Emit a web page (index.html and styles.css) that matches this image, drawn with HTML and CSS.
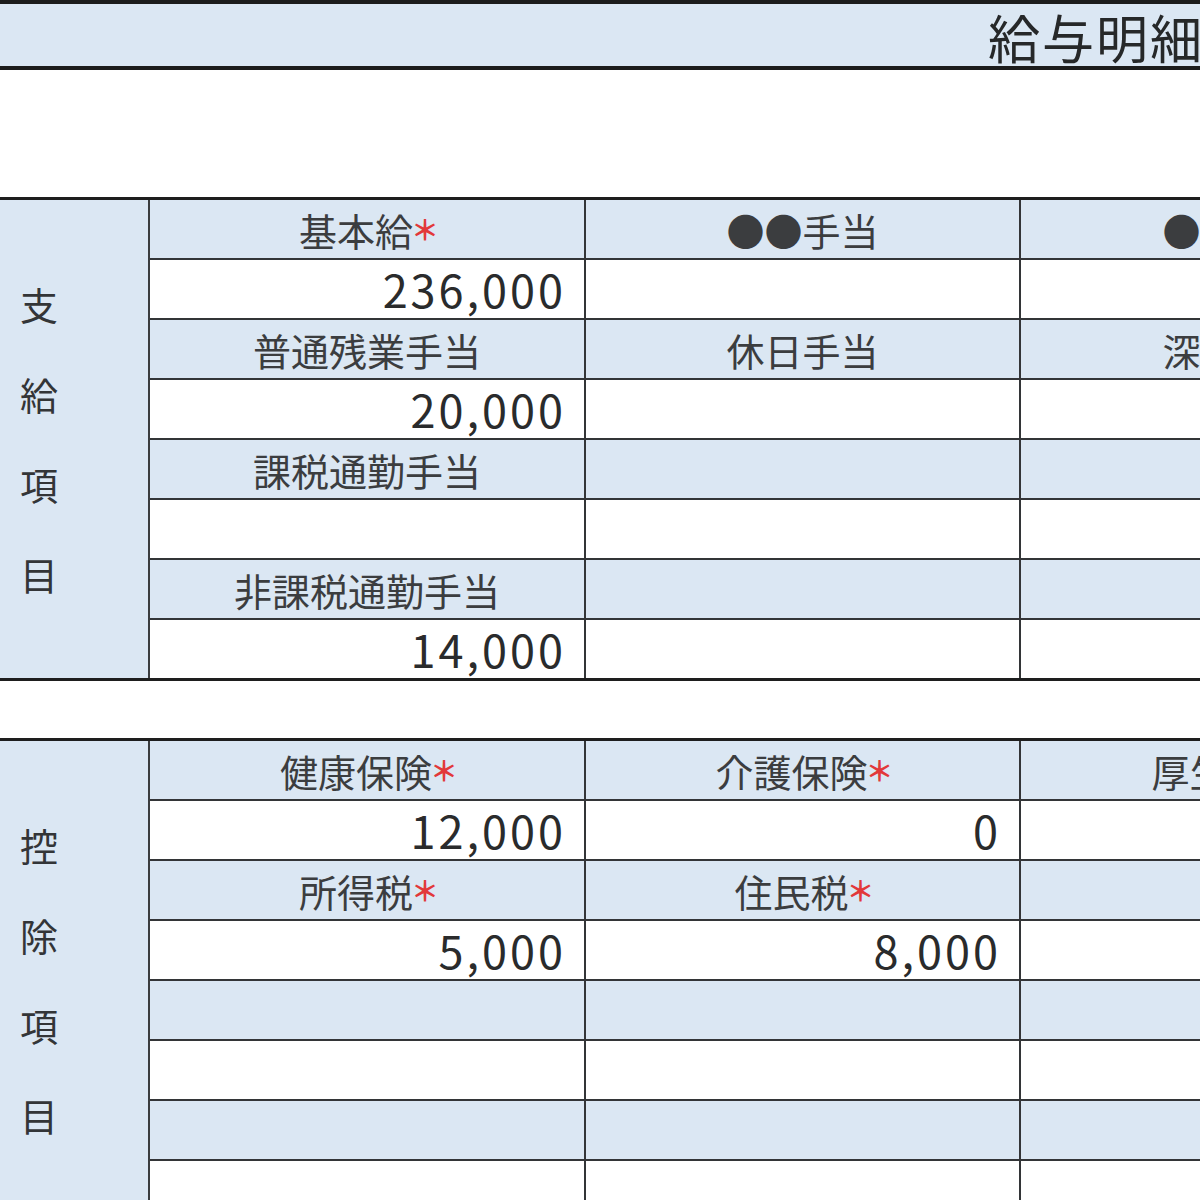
FILE: index.html
```html
<!DOCTYPE html>
<html lang="ja">
<head>
<meta charset="utf-8">
<title>給与明細</title>
<link rel="stylesheet" href="styles.css">
</head>
<body>
<div class="page">
  <header class="title-bar"><h1 class="title">給与明細</h1></header>

  <section class="sheet sheet-pay">
    <div class="side"><span>支</span><span>給</span><span>項</span><span>目</span></div>
    <div class="grid">
      <div class="cell h">基本給<span class="req">＊</span></div>
      <div class="cell h">●●手当</div>
      <div class="cell h">●●手当</div>
      <div class="cell v">236,000</div>
      <div class="cell v"></div>
      <div class="cell v"></div>
      <div class="cell h">普通残業手当</div>
      <div class="cell h">休日手当</div>
      <div class="cell h">深夜手当</div>
      <div class="cell v">20,000</div>
      <div class="cell v"></div>
      <div class="cell v"></div>
      <div class="cell h">課税通勤手当</div>
      <div class="cell h"></div>
      <div class="cell h"></div>
      <div class="cell v"></div>
      <div class="cell v"></div>
      <div class="cell v"></div>
      <div class="cell h">非課税通勤手当</div>
      <div class="cell h"></div>
      <div class="cell h"></div>
      <div class="cell v">14,000</div>
      <div class="cell v"></div>
      <div class="cell v"></div>
    </div>
  </section>

  <section class="sheet sheet-deduct">
    <div class="side"><span>控</span><span>除</span><span>項</span><span>目</span></div>
    <div class="grid">
      <div class="cell h">健康保険<span class="req">＊</span></div>
      <div class="cell h">介護保険<span class="req">＊</span></div>
      <div class="cell h">厚生年金<span class="req">＊</span></div>
      <div class="cell v">12,000</div>
      <div class="cell v">0</div>
      <div class="cell v"></div>
      <div class="cell h">所得税<span class="req">＊</span></div>
      <div class="cell h">住民税<span class="req">＊</span></div>
      <div class="cell h"></div>
      <div class="cell v">5,000</div>
      <div class="cell v">8,000</div>
      <div class="cell v"></div>
      <div class="cell h"></div>
      <div class="cell h"></div>
      <div class="cell h"></div>
      <div class="cell v"></div>
      <div class="cell v"></div>
      <div class="cell v"></div>
      <div class="cell h"></div>
      <div class="cell h"></div>
      <div class="cell h"></div>
      <div class="cell v"></div>
      <div class="cell v"></div>
      <div class="cell v"></div>
    </div>
  </section>
</div>
</body>
</html>
```
FILE: styles.css
```css
html, body {
  margin: 0;
  padding: 0;
  background: #ffffff;
}

.page {
  width: 1200px;
  height: 1200px;
  overflow: hidden;
  font-family: "Noto Sans CJK JP", "Noto Sans", sans-serif;
  color: #2f3133;
}

.title-bar {
  width: 1456px;
  height: 62px;
  background: #dbe7f3;
  border-top: 4px solid #1c1c1c;
  border-bottom: 4px solid #1c1c1c;
  display: flex;
  align-items: center;
  padding-left: 988px;
  box-sizing: content-box;
}

.title {
  margin: 4px 0 0 0;
  font-size: 52px;
  font-weight: 400;
  letter-spacing: 2px;
  line-height: 1;
  white-space: nowrap;
  color: #262829;
}

.sheet {
  width: 1456px;
  display: grid;
  grid-template-columns: 148px 1fr;
  column-gap: 2px;
  background: #3a3c3e;
  border-top: 3px solid #1e1e1e;
  border-bottom: 3px solid #1e1e1e;
}

.sheet-pay {
  margin-top: 127px;
}

.sheet-deduct {
  margin-top: 57px;
}

.side {
  background: #dbe7f3;
  display: flex;
  flex-direction: column;
  justify-content: center;
  gap: 52px;
  padding-left: 20px;
  font-size: 38px;
  line-height: 38px;
  color: #333537;
}

.grid {
  display: grid;
  grid-template-columns: 434px 433px 435px;
  grid-auto-rows: 58px;
  gap: 2px;
  background: #333537;
}

.cell {
  display: flex;
  align-items: center;
  white-space: nowrap;
  box-sizing: border-box;
}

.cell.h {
  background: #dbe7f3;
  justify-content: center;
  font-size: 38px;
  color: #3b3d3f;
}

.cell.v {
  background: #ffffff;
  justify-content: flex-end;
  padding-right: 18px;
  padding-bottom: 2px;
  font-size: 45px;
  letter-spacing: 3px;
  color: #2a2b2c;
}

.req {
  color: #e2383a;
  font-size: 28px;
  font-weight: 700;
  margin-right: -4px;
  margin-left: -2px;
}
```
